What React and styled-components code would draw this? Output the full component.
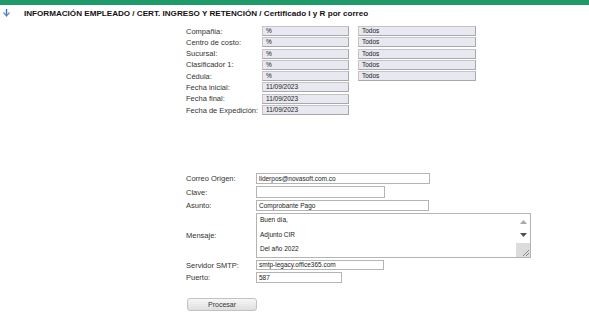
import React from "react";
import styled, { createGlobalStyle } from "styled-components";

// ── Styles ──────────────────────────────────────────────────
const GlobalStyle = createGlobalStyle`
  html, body {
    margin: 0;
    padding: 0;
    background: #fff;
  }
  body {
    font-family: "Liberation Sans", Arial, sans-serif;
    font-size: 7.5px;
    color: #333;
  }
`;

const Page = styled.div`
  width: 589px;
  height: 332px;
  overflow: hidden;
`;

const TopBar = styled.div`
  height: 5px;
  background: #1f9a69;
`;

const TitleRow = styled.div`
  display: flex;
  align-items: center;
  height: 16px;
  padding-left: 3px;
  gap: 14px;
`;

const TitleText = styled.span`
  font-weight: 700;
  font-size: 8.1px;
  color: #111;
  white-space: nowrap;
`;

// Form block
const FormGrid = styled.div`
  display: grid;
  grid-template-columns: ${(p) => p.$cols};
  grid-auto-rows: ${(p) => p.$row};
  row-gap: ${(p) => p.$gap};
  margin-left: 186px;
  margin-top: ${(p) => p.$top};
  align-items: center;
`;

const Label = styled.div`
  color: #333;
  white-space: nowrap;
`;

const ReadBox = styled.div`
  box-sizing: border-box;
  height: 10px;
  width: ${(p) => p.$w}px;
  background: #e8e8f0;
  border: 1px solid #c4c4c8;
  border-right-color: #a8a8ac;
  border-bottom-color: #a8a8ac;
  font-size: 6.5px;
  line-height: 8px;
  padding-left: 3px;
  color: #222;
`;

const Input = styled.div`
  box-sizing: border-box;
  height: ${(p) => p.$h || 11}px;
  width: ${(p) => p.$w}px;
  background: #fff;
  border: 1px solid #b4b4b4;
  font-size: 6.5px;
  line-height: ${(p) => (p.$h || 11) - 2}px;
  padding-left: 2px;
  color: #222;
`;

const MessageBox = styled.div`
  box-sizing: border-box;
  width: 275px;
  height: 45px;
  border: 1px solid #b4b4b4;
  display: flex;
  background: #fff;
`;

const MessageText = styled.div`
  flex: 1;
  padding: 1px 3px;
  font-size: 6.5px;
  color: #222;
  overflow: hidden;

  p {
    margin: 0;
    height: 14.5px;
    line-height: 9px;
  }
`;

const ScrollCol = styled.div`
  width: 14px;
  display: flex;
  flex-direction: column;
  align-items: center;
`;

const Arrow = styled.div`
  height: 14px;
  display: flex;
  align-items: center;
  justify-content: center;
  margin-top: ${(p) => p.$mt || 0}px;
`;

const Grip = styled.div`
  margin-top: auto;
  width: 14px;
  height: 14px;
  background: #dcdcdc;
  display: flex;
  align-items: flex-end;
  justify-content: flex-end;
`;

const ButtonRow = styled.div`
  margin: 15px 0 0 187px;
`;

const Button = styled.button`
  box-sizing: border-box;
  width: 70px;
  height: 13px;
  padding: 0;
  border: 1px solid #c2c2c2;
  border-radius: 3px;
  background: linear-gradient(#f7f7f7, #dedede);
  font-family: "Liberation Sans", Arial, sans-serif;
  font-size: 7px;
  color: #333;
`;

// ── Data ────────────────────────────────────────────────────
const FILTER_ROWS = [
  { label: "Compañia:", a: "%", b: "Todos" },
  { label: "Centro de costo:", a: "%", b: "Todos" },
  { label: "Sucursal:", a: "%", b: "Todos" },
  { label: "Clasificador 1:", a: "%", b: "Todos" },
  { label: "Cédula:", a: "%", b: "Todos" },
  { label: "Fecha inicial:", a: "11/09/2023" },
  { label: "Fecha final:", a: "11/09/2023" },
  { label: "Fecha de Expedición:", a: "11/09/2023" },
];

const CollapseIcon = () => (
  <svg width="7" height="8" viewBox="0 0 7 8">
    <path d="M3.5 0 V6" stroke="#3a6fb0" strokeWidth="1.4" />
    <path d="M0.5 3.5 L3.5 7 L6.5 3.5" fill="none" stroke="#5a8fd0" strokeWidth="1.2" />
  </svg>
);

// ── Component ────────────────────────────────────────────────
const App = () => (
  <Page>
    <GlobalStyle />
    <TopBar />
    <TitleRow>
      <CollapseIcon />
      <TitleText>
        INFORMACIÓN EMPLEADO / CERT. INGRESO Y RETENCIÓN / Certificado I y R por correo
      </TitleText>
    </TitleRow>

    <FormGrid $cols="76px 96px 118px" $row="10px" $gap="1.3px" $top="5px">
      {FILTER_ROWS.map((r) => (
        <React.Fragment key={r.label}>
          <Label>{r.label}</Label>
          <ReadBox $w={87}>{r.a}</ReadBox>
          {r.b ? <ReadBox $w={118}>{r.b}</ReadBox> : <span />}
        </React.Fragment>
      ))}
    </FormGrid>

    <FormGrid $cols="70px auto" $row="auto" $gap="2px" $top="58px">
      <Label>Correo Origen:</Label>
      <Input $w={174}>liderpos@novasoft.com.co</Input>
      <Label>Clave:</Label>
      <Input $w={129} $h={12} />
      <Label>Asunto:</Label>
      <Input $w={173}>Comprobante Pago</Input>
      <Label>Mensaje:</Label>
      <MessageBox>
        <MessageText>
          <p>Buen día,</p>
          <p>Adjunto CIR</p>
          <p>Del año 2022</p>
        </MessageText>
        <ScrollCol>
          <Arrow>
            <svg width="7" height="5" viewBox="0 0 7 5">
              <path d="M0 5 L3.5 1 L7 5Z" fill="#a8a8a8" />
            </svg>
          </Arrow>
          <Arrow>
            <svg width="7" height="5" viewBox="0 0 7 5">
              <path d="M0 0 L3.5 4 L7 0Z" fill="#505050" />
            </svg>
          </Arrow>
          <Grip>
            <svg width="8" height="8" viewBox="0 0 8 8">
              <path d="M7 1 L1 7 M7 4 L4 7" stroke="#777" strokeWidth="0.8" />
            </svg>
          </Grip>
        </ScrollCol>
      </MessageBox>
      <Label>Servidor SMTP:</Label>
      <Input $w={128} $h={10}>smtp-legacy.office365.com</Input>
      <Label>Puerto:</Label>
      <Input $w={86}>587</Input>
    </FormGrid>

    <ButtonRow>
      <Button>Procesar</Button>
    </ButtonRow>
  </Page>
);

export default App;
